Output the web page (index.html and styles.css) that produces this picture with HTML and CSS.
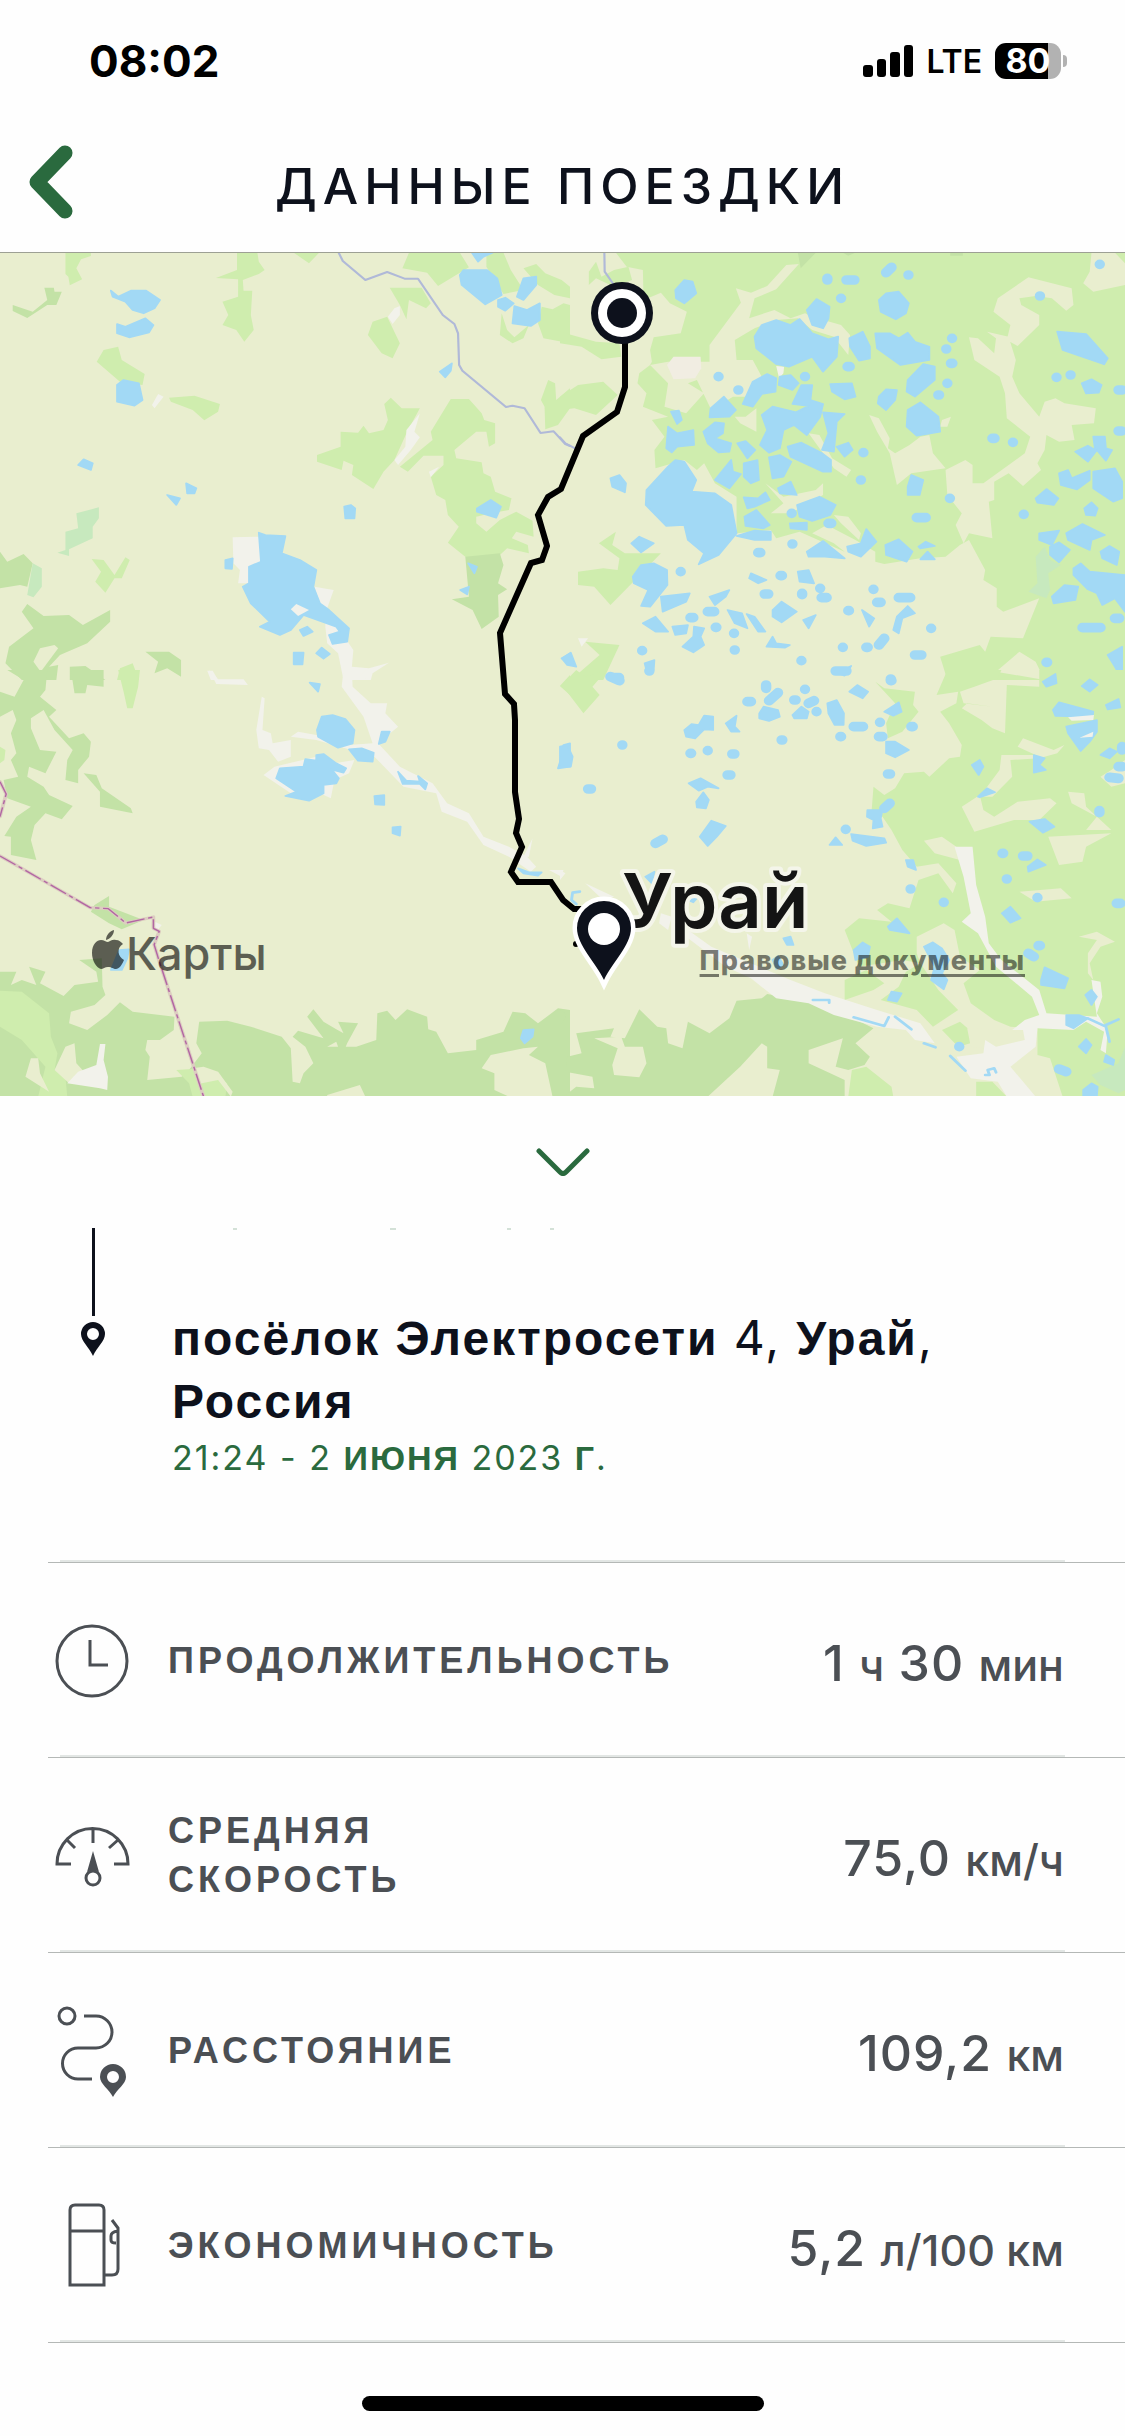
FILE: index.html
```html
<!DOCTYPE html>
<html lang="ru">
<head>
<meta charset="utf-8">
<meta name="viewport" content="width=device-width, initial-scale=1">
<title>Данные поездки</title>
<link rel="stylesheet" href="styles.css">
</head>
<body>
<div class="screen">
  <div class="status">
    <span class="status-time">08:02</span>
    <div class="status-right">
      <svg class="signal" viewBox="0 0 50 32" aria-hidden="true">
        <rect x="0" y="20" width="10" height="12" rx="3"/><rect x="14" y="14" width="9" height="18" rx="3"/><rect x="27" y="7" width="10" height="25" rx="3"/><rect x="41" y="0" width="9" height="32" rx="3"/>
      </svg>
      <span class="network">LTE</span>
      <span class="battery"><span class="battery-level">80</span></span>
    </div>
  </div>

  <header class="header">
    <button class="back" type="button" aria-label="Назад">
      <svg viewBox="0 0 46 76" aria-hidden="true"><path d="M37 9 9 38 37 67"/></svg>
    </button>
    <h1 class="title">ДАННЫЕ ПОЕЗДКИ</h1>
  </header>

  <section class="map" aria-label="Маршрут поездки">
    <svg class="map-canvas" viewBox="0 253 1125 843" preserveAspectRatio="xMidYMid slice">
      <!-- north-west -->
      <g transform="translate(0 250) scale(.36352 .33333)">
        <path class="meadow" d="M180 8 250 8 250 18 223 28 210 55 226 88 192 106 188 80 180 72zM652 8 708 8 712 35 728 60 712 72 668 90 670 122 694 122 690 195 698 240 672 275 650 240 612 225 628 195 612 155 655 140 655 88 594 84 652 60zM808 8 878 8 850 40zM1125 8 1265 8 1290 52 1205 108 1175 68 1107 55zM1338 8 1385 8 1405 60 1440 120 1385 132 1338 50zM1440 55 1475 42 1500 70 1545 90 1568 110 1568 145 1525 135 1480 105zM1490 170 1520 178 1550 160 1568 165 1568 280 1495 265 1480 220zM1380 190 1395 240 1415 262 1455 225 1440 265 1410 280 1375 255zM1072 113 1160 113 1185 160 1172 175 1125 150 1118 208 1100 165zM1065 200 1100 280 1080 325 1050 310 1012 255 1025 215zM325 290 335 330 398 372 392 405 330 395 266 335 285 300zM465 443 535 437 605 462 600 485 562 511 530 480 470 455z"/>
        <path class="meadow" d="M1075 443 1105 475 1155 475 1120 545 1085 630 1055 665 1027 717 968 675 972 645 945 632 940 660 872 635 872 615 937 590 937 545 985 548 1000 527 1015 550 1055 540 1067 510 1057 462zM1240 447 1290 447 1325 490 1332 510 1362 520 1362 580 1345 590 1338 545 1310 545 1250 600 1255 625 1325 637 1330 670 1350 680 1362 725 1407 745 1400 780 1350 790 1310 800 1310 820 1338 845 1375 810 1420 785 1465 812 1468 860 1420 845 1408 865 1452 885 1455 910 1395 895 1370 920 1285 925 1232 878 1262 830 1232 795 1225 750 1200 735 1185 680 1220 645 1220 617 1165 617 1122 665 1100 650 1190 570 1185 545zM1508 390 1527 400 1530 450 1568 415 1568 475 1535 525 1500 538 1498 470 1488 450zM252 927 285 930 315 975 345 922 357 930 335 985 315 985 290 1028 262 995 278 965zM330 1255 365 1240 382 1290 322 1290z"/>
        <path class="forest" d="M122 113 148 113 150 125 170 125 155 165 130 165 75 204 35 183 35 165 90 185 130 150zM0 905 20 935 65 912 90 940 75 1010 55 1005 0 1015zM75 1062 120 1098 190 1095 228 1125 303 1080 303 1115 240 1180 165 1215 135 1250 160 1245 155 1290 60 1290 15 1240 25 1190 92 1135 60 1085zM192 1250 235 1248 290 1290 192 1290zM400 1205 465 1205 498 1230 498 1280 460 1255 425 1270 435 1235zM1280 920 1375 910 1385 945 1370 1000 1395 1018 1370 1035 1372 1100 1325 1137 1300 1080 1243 1048 1290 1040 1285 980z"/>
        <path class="plain" d="M150 1185 160 1195 112 1265 92 1235 110 1195z"/>
        <path class="marsh" d="M210 790 272 772 272 805 255 830 255 865 190 898 190 918 158 908 180 900 180 845 215 835zM90 940 115 955 115 1010 92 1042 75 1035z"/>
        <path class="sand" d="M1085 175 1100 168 1100 195 1080 222 1067 200zM418 465 435 432 450 440 425 475zM1155 490 1140 545 1155 562 1130 600 1095 645 1085 630 1115 590 1118 540zM1180 665 1208 650 1185 682zM640 862 712 860 720 945 690 950 688 1000 655 1000 660 960 642 940zM865 1010 918 1020 900 1075 880 1060zM895 1075 935 1115 955 1130 950 1165 972 1200 968 1250 1015 1255 1070 1238 1025 1270 1020 1290 945 1290 930 1210 900 1180 895 1130zM570 1262 585 1262 600 1290 580 1290z"/>
        <path class="water" d="M305 122 325 140 360 122 402 122 440 150 425 175 395 190 365 180 345 155 310 140zM322 222 345 230 400 205 422 225 410 247 355 262 322 250zM340 390 382 400 392 450 370 467 322 455 322 405zM215 645 230 628 255 640 250 660zM512 700 540 715 535 730 515 730zM460 735 495 745 485 765zM947 770 965 765 977 775 975 805 950 805zM1265 75 1275 60 1340 60 1368 85 1380 135 1335 163 1270 105zM1298 8 1355 8 1330 20 1315 35zM1440 85 1475 80 1475 105 1440 150 1422 140zM1370 150 1390 143 1413 160 1390 182 1370 170zM1415 168 1450 180 1485 160 1485 210 1460 228 1410 220zM1210 365 1243 340 1240 362 1225 382zM1312 775 1350 750 1378 770 1365 803 1312 785zM1288 940 1312 950 1305 970zM1266 1020 1290 1010 1285 1033zM620 930 640 925 638 957 620 955zM825 1140 845 1130 860 1145 835 1158zM808 1208 835 1208 832 1243 808 1243zM870 1210 885 1193 907 1212 890 1226zM1545 1225 1568 1210 1568 1245zM712 848 730 855 785 858 775 910 825 930 870 960 862 1010 880 1060 905 1080 960 1135 955 1175 915 1182 905 1155 935 1145 925 1130 835 1095 800 1140 770 1155 715 1130 742 1115 690 1060 668 1010 685 1000 685 950 718 935z"/>
        <path class="sand" d="M800 1078 815 1062 850 1080 820 1098z"/>
      </g>

      <!-- south-west -->
      <g transform="translate(0 670) scale(.36352 .33333)">
        <path class="forest" d="M20 0 130 0 125 60 110 80 155 120 135 140 190 205 230 190 250 215 245 260 215 300 215 340 180 330 185 270 200 240 150 180 120 120 85 145 85 175 110 240 155 245 125 310 80 290 75 320 120 350 135 375 200 408 170 448 125 430 95 465 85 510 100 570 30 555 30 500 12 498 45 440 85 410 20 385 10 330 50 320 30 270 45 250 30 190 45 150 35 120 0 140 0 65 40 80 65 30zM195 0 285 0 285 50 240 45 235 70 205 70zM230 310 265 315 280 355 360 415 365 430 275 410 275 365zM300 678 300 710 395 750 335 778 300 760 250 725 260 705z"/>
        <path class="forest" d="M0 905 45 905 30 945 60 930 100 945 80 890 125 905 110 940 175 978 205 945 270 935 265 905 218 870 280 865 282 950 290 975 260 1005 195 1025 190 1060 240 1080 295 1035 330 997 365 1025 480 1040 478 1080 440 1110 405 1110 400 1140 412 1160 405 1230 500 1220 520 1200 555 1150 540 1120 548 1055 625 1052 690 1070 775 1100 800 1135 805 1235 825 1240 835 1210 862 1180 840 1130 805 1100 820 1082 890 1105 845 1040 862 1018 890 1055 925 1078 945 1090 930 1055 985 1060 955 1120 940 1160 925 1115 900 1130 980 1130 1035 1110 1038 1030 1065 1022 1088 1050 1120 1018 1175 1040 1178 1078 1200 1085 1232 1150 1310 1140 1310 1110 1385 1085 1410 1025 1445 1030 1480 1060 1535 1015 1568 1020 1568 1280 1520 1280 1500 1180 1455 1155 1480 1130 1440 1135 1350 1155 1325 1195 1360 1210 1360 1260 1400 1280 0 1280z"/>
        <path class="meadow" d="M0 962 60 965 135 1030 140 1100 158 1150 150 1200 180 1220 185 1280 105 1280 125 1190 60 1110 0 1070zM485 1200 560 1195 625 1240 620 1280 530 1280 520 1240zM325 0 385 0 380 50 365 115 350 115 340 65zM1568 15 1540 48 1568 75zM0 230 15 240 12 270 0 280z"/>
        <path class="plain" d="M205 1120 210 1180 235 1210 190 1240 150 1200 180 1130zM85 1165 105 1165 110 1210 135 1265 70 1220zM900 1275 990 1245 1005 1280 900 1280zM560 1190 600 1205 640 1265 635 1280 600 1230 545 1242 530 1195z"/>
        <path class="sand" d="M275 1122 290 1122 285 1170 297 1220 295 1260 275 1255 185 1240 215 1205 265 1185zM720 80 728 85 722 180 745 190 750 220 800 210 800 260 765 275 740 240 712 235 705 180zM800 200 820 185 870 195 960 225 1025 220 1000 140 940 50 945 0 968 0 970 50 1020 100 1065 100 1060 130 1095 170 1040 220 1100 290 1190 340 1230 400 1290 430 1330 500 1400 530 1450 560 1475 590 1460 605 1400 560 1330 525 1285 455 1215 425 1200 370 1110 350 1030 260 950 235 870 210zM725 315 755 290 870 260 920 280 975 270 960 310 920 330 910 385 880 370 800 370zM1440 560 1465 505 1455 560zM1510 600 1550 600 1545 620zM415 750 445 765 430 785zM575 0 600 28 670 28 682 45 595 42zM1005 0H1020L1010 25 985 22z"/>
        <path class="water" d="M885 140 915 135 950 147 975 180 970 220 930 233 875 200 872 180zM960 238 995 235 1028 248 1025 275 985 272zM870 255 890 252 925 280 952 295 945 308 912 298 932 325 925 340 890 345 890 370 850 392 785 378 815 365 760 325 770 295 835 290 840 267 870 272zM852 38 880 42 875 65zM1050 185 1072 185 1060 215 1042 222zM1095 305 1118 332 1155 335 1150 318 1175 340 1170 358 1155 342 1108 342zM1030 378 1057 375 1057 405 1032 403zM1080 472 1102 470 1100 497 1080 490zM1425 595 1455 607 1490 607 1480 617 1440 610zM1550 225 1568 220 1568 290 1535 295 1545 260zM1440 1080 1468 1078 1465 1100 1443 1120 1433 1105zM328 840 355 838 350 865 335 900 305 900z"/>
        <path class="border-glow" d="M0 558 60 595 248 713 298 716 346 759 422 741 422 775 438 784 424 824 437 870 560 1280M0 335 17 372 0 440"/>
        <path class="border-line" d="M0 558 60 595 248 713 298 716 346 759 422 741 422 775 438 784 424 824 437 870 560 1280M0 335 17 372 0 440"/>
      </g>

      <!-- north-east -->
      <g transform="translate(560 250) scale(.36033 .33333)">
        <path class="meadow" d="M155 8 1568 8 1568 1290 1075 1290 1055 1220 1165 1185 1180 1205 1195 1160 1285 1165 1330 1045 1230 1085 1212 1070 1212 1015 1175 990 1180 960 1135 870 1110 885 1070 920 1000 925 900 942 875 935 875 905 820 870 740 825 700 850 760 880 790 905 665 845 600 865 585 840 490 850 490 740 430 700 400 640 380 660 345 630 265 655 262 600 290 560 255 510 300 500 230 470 240 430 215 400 220 370 250 345 255 335 250 300 260 262 335 250 352 185 305 160 280 128 232 150 230 60 185 50z"/>
        <path class="meadow" d="M80 65 100 35 115 80 150 60 190 50 200 90 150 110 100 85 80 105zM0 245 100 275 165 280 170 320 115 328 60 290 0 280zM0 440 50 405 120 395 160 435 100 495 40 475 0 480zM108 880 155 845 145 885 180 910 280 910 190 1010 140 1065 95 1010 50 1005 50 965 120 955 160 960 165 925zM70 1175 165 1185 120 1290 30 1290 110 1215z"/>
        <path class="plain" d="M663 42 628 45 575 108 530 128 488 115 502 158 415 285 415 335 300 335 250 345 300 400 290 470 350 490 400 430 355 400 380 390 420 480 480 440 520 440 560 380 535 330 490 330 485 270 540 235 600 210 660 205 700 240 760 260 800 315 805 255 780 225 700 200 680 190 640 205 595 180 525 205 540 145 600 118zM485 500 515 500 545 475 545 545 500 520zM1300 82 1420 115 1425 165 1405 182 1365 145 1320 138 1275 145 1280 165 1330 195 1330 225 1270 288 1240 270 1250 225 1203 185 1215 145zM1475 8 1540 8 1568 40 1568 105 1480 125 1452 100 1470 65zM1135 262 1160 265 1205 310 1210 265 1185 245 1245 260 1265 330 1255 380 1275 430 1330 500 1345 455 1375 445 1400 460 1487 475 1482 520 1420 525 1428 570 1385 575 1350 555 1345 600 1325 640 1335 660 1285 708 1245 670 1205 695 1205 750 1190 755 1200 865 1135 850 1120 880 1098 825 1115 790 1075 735 1070 660 1125 630 1145 645 1145 700 1175 700 1290 610 1305 560 1240 505 1235 430 1220 380 1150 330z"/>
        <path class="plain" d="M858 495 885 505 915 565 910 595 930 610 970 585 1000 560 1025 555 1035 610 1070 655 975 670 935 705 915 610 880 545zM1060 510 1085 500 1075 530 1055 530zM690 550 720 555 755 625 808 660 795 680 760 655zM570 700 620 740 710 720 730 700 730 735 640 790 585 790 620 760zM760 795 800 800 835 850 830 870 780 820zM1275 1205 1320 1235 1345 1290 1210 1265z"/>
        <path class="marsh" d="M1345 890 1360 930 1390 945 1355 970 1360 1020 1350 1045 1300 1025 1325 1000 1320 920z"/>
        <path class="forest" d="M660 8 710 8 668 55zM785 8H820L800 17zM1083 8H1118V17H1083z"/>
        <path class="town" d="M297 345 315 320 390 320 392 355 375 385 315 388z"/>
        <path class="sand" d="M600 348 622 350 620 370 608 385zM50 1165 78 1165 60 1190z"/>
        <path class="water" d="M320 120 345 90 368 95 378 130 345 160 322 145zM540 260 560 225 600 210 640 225 665 207 700 250 745 268 772 260 768 320 730 365 700 320 635 350 600 342 545 295zM685 180 712 147 748 170 745 205 730 235 700 225zM885 150 905 130 940 125 968 160 960 190 932 208 890 185zM803 265 840 245 860 290 860 325 830 332 805 290zM875 250 915 250 940 265 965 248 985 275 1025 290 1025 330 945 345 880 295zM1008 342 1040 350 1040 390 985 440 962 425 965 390zM965 480 1000 457 1050 500 1055 545 990 557 962 530zM1380 245 1460 252 1520 325 1510 343 1395 300zM1448 400 1475 388 1503 405 1495 428 1460 430zM885 440 905 418 935 420 930 450 905 480 882 460zM750 402 810 400 820 440 790 448 755 425zM535 395 575 372 600 385 598 425 560 432 535 470 507 462zM610 380 640 375 662 400 645 420 607 405zM670 405 700 405 695 450 730 462 722 500 685 555 650 525 620 540 610 595 580 608 555 585 575 540 560 495 590 470 655 487 690 468 645 462z"/>
        <path class="water" d="M418 475 455 440 488 480 470 500 415 502zM300 530 325 550 370 540 372 585 325 590 310 607 295 595zM398 545 430 517 455 520 452 550 430 565 475 580 470 605 440 607 410 580zM308 485 330 482 338 510 325 522zM492 580 515 573 542 600 520 625zM730 487 790 492 768 515 760 605 727 600 745 550zM632 590 670 578 725 608 752 630 752 665 730 665 640 620zM768 590 800 578 812 600 790 620zM580 622 610 615 642 635 620 680 590 685zM510 640 548 630 552 690 530 700 510 680zM430 690 475 630 480 665 502 672 470 715zM605 715 640 695 657 735 610 730zM300 650 320 630 345 635 378 690 365 725 430 730 475 765 490 850 440 915 385 943 400 910 355 870 345 825 295 828 238 765 240 720zM658 765 720 740 765 765 750 795 700 813 665 800zM510 742 550 745 570 727 582 750 540 770 520 775zM512 800 545 780 582 825 565 835 515 828zM490 858 540 842 585 845 585 870 540 870zM638 820 685 818 685 840 640 835zM685 905 730 873 790 925 735 920 690 920zM797 890 835 880 850 837 878 875 835 920 800 905zM903 885 940 868 978 905 962 935 905 915zM995 890 1015 875 1040 888 1000 895zM1000 928 1020 905 1040 928z"/>
        <path class="water" d="M965 710 975 675 1008 690 998 735 965 735zM1320 745 1350 717 1383 745 1370 765 1325 758zM1385 670 1410 660 1420 685 1470 662 1470 690 1435 718 1390 705zM1480 665 1540 655 1560 695 1560 745 1535 755 1480 715zM1330 850 1385 842 1365 885 1330 870zM1405 850 1450 822 1512 855 1475 870 1470 900 1410 870zM1360 890 1385 877 1415 900 1385 937 1360 915zM1425 955 1445 940 1470 965 1568 975V1085L1540 1045 1505 1065 1490 1030 1465 1018 1425 975zM1365 1040 1400 1005 1438 1010 1430 1050 1370 1060zM1500 905 1525 888 1552 905 1545 945 1505 925zM1430 605 1465 587 1485 600 1480 560 1512 560 1515 595 1532 600 1515 632 1490 600 1465 635zM1455 775 1475 757 1492 775 1485 797 1460 795zM202 980 225 945 260 940 297 960 298 1005 250 1070 225 1068 245 1020 205 1000zM198 880 220 860 260 880 225 907zM280 1040 360 1030 350 1055 285 1085zM415 1040 470 1020 460 1040 430 1065zM590 1080 615 1055 657 1085 615 1117 590 1100zM230 1120 265 1100 300 1145 265 1145zM340 1190 370 1160 372 1130 400 1135 390 1160 400 1185 370 1207zM312 1130 355 1125 350 1150 320 1155zM465 1080 505 1090 520 1135 485 1120zM518 1092 540 1100 570 1145 550 1145zM660 965 690 960 705 1000 665 995zM925 1140 935 1100 965 1068 985 1090 950 1105 940 1150zM530 970 573 990 550 1000 525 985zM675 1110 710 1095 690 1135zM573 1190 590 1160 600 1180 638 1185 625 1193zM838 1080 872 1105 858 1130zM770 1270 808 1248 790 1277zM1520 1215 1560 1190V1290L1540 1250zM235 1240 262 1230 260 1260 242 1270zM5 1225 30 1208 45 1250 20 1245zM140 685 165 675 183 700 180 727 145 710z"/>
        <path class="pond" d="M742 85v5M795 90h22M905 68 920 52M967 75h0M780 145h0M440 380h0M495 420h0M680 380h0M798 350h6M1088 265h0M1072 297h0M1085 340h4M1075 400h0M1050 435h2M1378 382h0M1417 375h0M1332 138h0M1498 43h0M1200 565h6M1257 577h0M842 608h0M835 690h0M1082 745h0M1287 793h0M643 790h0M745 820h8M990 803h25M550 908h6M645 882h0M335 965h0M612 977h4M568 1032h10M672 1030v4M722 1015h0M740 1043h-14M870 1018h0M880 1057h10M940 1043h32M410 1085h18M362 1103h8M432 1132h2M483 1150h0M485 1200h0M800 1082h2M785 1192h0M850 1192h4M885 1185 900 1165M1030 1135h0M228 1202h0M670 1232h0M985 1215h18M1350 1237h2M1550 543h8M1550 420h10M1450 1133h50M1540 1105h12M150 1283h14M918 1287h0M1362 1285h0"/>
        <path class="river" d="M123 0 124 65 148 102M0 562 15 580 42 595"/>
      </g>

      <!-- south-east -->
      <g transform="translate(560 670) scale(.36033 .33333)">
        <path class="meadow" d="M1075 0 1225 0 1215 25 1150 50 1110 65 1120 100 1200 110 1130 100 1115 115 1170 150 1200 175 1235 190 1240 45 1330 50 1330 0 1568 0V1280H1395L1360 1165 1325 1155 1325 1075 1250 1070 1205 1050 1140 1000 1120 940 1165 900 1110 860 1095 780 1065 760 990 800 990 850 1000 880 950 870 830 890 790 780 830 745 920 755 880 720 910 700 970 715 995 630 1050 610 1070 640 1090 670 1100 640 1050 580 990 590 950 540 920 480 895 440 865 420 870 350 900 375 930 355 955 310 1010 305 1025 320 1080 265 1110 260 1115 225 1080 160 1055 125 1100 100 1105 65 1045 75z"/>
        <path class="meadow" d="M875 35 900 55 985 65 980 105 995 125 950 185 910 205 905 160 930 100zM5 45 45 0 70 20 130 0 90 50 110 75 65 130zM1060 1080 1110 1055 1170 1110 1105 1130zM810 1200 850 1190 920 1250 925 1280 800 1280zM1155 1235 1200 1235 1240 1280 1155 1280zM960 905 1000 880 1050 960 1105 1020 1035 1070 990 1020 890 990 940 950zM790 930 850 900 900 940 870 960 790 990z"/>
        <path class="plain" d="M1115 410 1165 375 1175 420 1205 440 1270 395 1360 385 1378 400 1330 450 1260 450 1150 485zM1225 255 1320 255 1270 230 1285 205 1370 240 1400 225 1380 250 1330 265 1250 270 1255 320 1200 380 1165 380 1220 300zM1355 500 1530 490 1460 530 1450 575 1385 585zM1410 365 1455 370 1460 410 1530 480 1460 480 1490 440 1420 400zM1275 665 1390 655 1420 685 1320 695zM1010 512 1060 500 1100 530 1110 570 1040 550zM1440 800 1490 785 1540 815 1500 830 1470 880 1480 930 1465 910 1465 850 1490 810zM1130 1075 1250 1080 1310 1110 1300 1150 1140 1130zM1500 320 1530 300 1568 270V340L1530 350z"/>
        <path class="forest" d="M0 1020 20 1035 0 1065zM45 1090 150 1075 140 1100 180 1105 220 1018 270 1070 295 1075 300 1120 340 1135 355 1055 415 1090 470 1045 490 992 560 985 575 972 740 1005 870 1075 820 1120 860 1160 845 1185 800 1200 765 1190 785 1105 690 1140 690 1180 750 1210 790 1230 790 1280H10L45 1250 95 1255 90 1220 15 1205 20 1160 60 1150z"/>
        <path class="plain" d="M95 1105 170 1100 180 1130 230 1130 240 1180 220 1222 150 1215 145 1185 160 1135zM560 1120 575 1130 575 1195 610 1200 590 1280H410L500 1190z"/>
        <path class="marsh" d="M1568 1130 1550 1180 1475 1215 1500 1245 1550 1270 1568 1260z"/>
        <path class="sand" d="M355 780 420 830 640 930 735 970 880 1020 1000 1060 1040 1120 985 1110 960 1080 880 1070 760 1035 690 1000 600 985 530 925 460 890 350 800zM1095 530 1145 530 1155 645 1180 740 1190 820 1225 870 1330 960 1350 1030 1420 1035 1490 1040 1475 930 1500 935 1505 980 1490 1030 1520 1080 1515 1150 1500 1140 1510 1085 1460 1055 1425 1080 1325 1075 1320 1130 1250 1190 1320 1280 1240 1280 1215 1235 1140 1225 1100 1160 1175 1150 1180 1110 1210 1130 1290 1110 1285 1080 1255 1080 1290 1050 1330 1035 1310 980 1210 890 1160 790 1115 755 1140 730 1120 620zM280 730 310 740 300 780 275 760zM70 640 150 680 120 690zM518 790 533 800 525 840zM0 600 15 610 0 630z"/>
        <path class="water" d="M345 180 365 162 385 165 400 137 425 140 425 180 400 178 375 205 350 200zM460 160 490 137 485 170 498 185 475 185zM553 130 565 110 605 120 610 140 580 153 553 145zM645 135 670 110 690 125 685 145 650 145zM742 100 768 90 788 130 787 165 762 165 745 130zM803 65 825 45 855 65 840 85zM900 125 940 97 948 125 925 137zM905 215 930 215 968 240 930 262 905 250zM357 340 390 325 440 355 410 350 385 362zM378 395 398 367 413 390 405 415 380 412zM388 500 420 452 460 468 435 500 410 528zM748 525 765 502 783 525zM808 492 900 505 905 518 850 528 812 512zM853 420 895 420 890 445 895 470 868 475 870 450 852 440zM0 230 20 225 35 260 30 290 0 290zM1368 120 1385 97 1480 125 1478 140 1375 138zM1405 170 1490 150 1490 185 1470 215 1445 243 1420 205 1410 190zM1448 48 1470 28 1492 45 1470 65zM1340 35 1375 12 1378 40 1350 50zM1143 285 1165 270 1175 290 1162 315zM1315 255 1345 265 1330 285 1348 300 1315 308zM1160 380 1185 355 1207 367 1165 382zM1303 455 1345 447 1372 470 1340 488zM1298 590 1325 568 1348 585 1300 605zM1226 730 1250 710 1278 745 1250 758zM960 570 980 570 988 600 965 590zM910 770 935 745 970 790 915 780zM815 840 840 817 860 830 855 860 820 870zM1010 830 1035 817 1060 835 1080 870 1060 910 1075 930 1065 958 1030 930 1040 890zM1335 930 1345 892 1410 925 1400 955 1335 945zM1458 975 1475 960 1490 980 1475 1005zM910 990 920 965 948 970 935 995zM1405 1035 1440 1035 1465 1045 1425 1075 1405 1065zM1440 1130 1460 1107 1475 1125 1460 1150zM1515 1155 1538 1170 1535 1185 1510 1175zM1452 1260 1475 1240 1492 1250 1490 1277 1452 1277zM1500 255 1525 235 1545 245 1525 265zM1515 105 1550 87 1555 112 1520 118zM590 870 605 858 620 885 600 897zM620 805 640 800 648 825 630 825zM237 620 262 605 255 640z"/>
        <path class="pond" d="M572 45v10M580 92 605 68M520 95h10M650 90h4M680 58h0M690 100 705 92M712 125h0M765 3 795 3M918 32h2M888 157h0M815 170h26M885 200h10M975 170h4M778 200h2M615 210h2M173 225h0M362 250h2M410 242h0M478 252h6M465 315h8M910 312h6M78 357h8M793 478h0M900 415 915 400M265 520 285 508M973 657h0M1065 697h0M1240 627h0M1228 550h2M1285 558h12M1325 683h0M1328 827h4M1300 850 1315 860M1545 700h10M1497 422v6M1550 290h10M1525 322 1550 325M1108 1130h0M1385 1197 1405 1205M140 20 165 32M248 3h0M1560 230v10"/>
        <path class="stream" d="M702 990h45v8M815 1042 900 1068 912 1042M930 1040 975 1078M1010 1120 1042 1132M1083 1158 1125 1202M1180 1215h12l-5-15 18-5 5 12M1465 1045 1515 1070 1525 1115M1515 1065 1550 1048M55 665 35 668 32 690 45 702"/>
        <path class="sand" d="M1410 142 1482 135 1480 150 1420 152zM1442 203 1480 185 1478 200z"/>
        <path class="water" d="M355 690 370 677 380 685 370 697z"/>
      </g>

      <path class="river" transform="translate(0 250) scale(.36352 .33333)" d="M928 0 943 33 1005 90 1065 66 1113 86 1150 86 1218 195 1250 222 1260 250 1263 345 1272 362 1392 471 1410 467 1443 475 1487 549 1523 544 1555 582 1568 588"/>
      <path class="route" d="M625 340V387L617 412 583 436 561 489 548 497 538 515 547 546 542 560 531 563 500 633 505 694 514 704 515 720V792L519 819 516 833 522 847 511 872 518 882H551L563 900 574 909H584"/>
      <circle cx="576" cy="944" r="3"/>

      <text class="city" x="622" y="928">Урай</text>

      <g class="marker">
        <circle cx="622" cy="313" r="31"/><circle class="marker-hole" cx="622" cy="313" r="24"/><circle cx="622" cy="313" r="15"/>
      </g>
      <g class="marker">
        <path class="marker-edge" d="M604 980C596 963 577 945 577 928A27 27 0 0 1 631 928C631 945 612 963 604 980z"/>
        <circle class="marker-hole" cx="604" cy="929" r="16"/>
      </g>
    </svg>
    <div class="map-legal">
      <span class="map-brand">
        <svg viewBox="0 0 32 40" aria-hidden="true"><path d="M22 0C22 5 18 9 14 10 14 5 18 1 22 0zM16 12C19 11 20 9 24 10 27 10 29 12 31 14 24 18 26 27 32 30 30 35 27 39 24 39 21 39 20 37 16 37 13 37 11 39 9 39 4 38 0 30 0 23 0 14 5 10 9 10 12 10 14 12 16 12z"/></svg>
        <span>Карты</span>
      </span>
      <a class="map-link" href="#legal">Правовые документы</a>
    </div>
  </section>

  <main class="sheet">
    <button class="collapse" type="button" aria-label="Свернуть">
      <svg viewBox="0 0 54 28" aria-hidden="true"><path d="M3 3 24 24Q27 27 30 24L51 3"/></svg>
    </button>

    <div class="place">
      <div class="place-track">
        <span class="place-line"></span>
        <svg class="place-pin" viewBox="0 0 24 34" aria-hidden="true"><path fill-rule="evenodd" d="M12 34C8 25 0 19 0 12A12 12 0 0 1 24 12C24 19 16 25 12 34zM12 6A6 6 0 1 0 12 18 6 6 0 1 0 12 6z"/></svg>
      </div>
      <div class="place-text">
        <!-- tails of the departure line scrolled under the panel edge -->
        <svg class="scrolled-line" viewBox="0 0 400 2" aria-hidden="true"><path d="M61 1h4M218 1h6M335 1h4M378 1h4"/></svg>
        <p class="address">посёлок Электросети <span class="light">4,</span> Урай<span class="light">,</span> Россия</p>
        <p class="date"><span class="light">21:24 - 2</span> ИЮНЯ <span class="light">2023</span> Г<span class="light">.</span></p>
      </div>
    </div>

    <dl class="stats">
      <div class="stat">
        <dt class="stat-name">
          <svg class="stat-icon" viewBox="0 0 80 100" aria-hidden="true"><circle cx="40" cy="51" r="35"/><path d="M38 30V55H56"/></svg>
          <span>ПРОДОЛЖИТЕЛЬНОСТЬ</span>
        </dt>
        <dd class="stat-value">1 <span class="unit">ч</span> 30 <span class="unit">мин</span></dd>
      </div>
      <div class="stat">
        <dt class="stat-name">
          <svg class="stat-icon" viewBox="0 0 80 100" aria-hidden="true"><path d="M19 59H5A35 35 0 0 1 76 59H62M41 24V38M15 35 23 43M66 35 57 43"/><circle cx="41" cy="73" r="7"/><path class="solid" d="M41 46 47 67Q41 63 35 67z"/></svg>
          <span>СРЕДНЯЯ СКОРОСТЬ</span>
        </dt>
        <dd class="stat-value">75,0 <span class="unit">км/ч</span></dd>
      </div>
      <div class="stat">
        <dt class="stat-name">
          <svg class="stat-icon" viewBox="0 0 80 100" aria-hidden="true"><circle cx="15" cy="16" r="8"/><path d="M32 16H44A15 15 0 0 1 44 48H26A15 15 0 0 0 26 79H40"/><path class="solid" fill-rule="evenodd" d="M61 97C57 89 48 84 48 77A13 13 0 0 1 74 77C74 84 65 89 61 97zM61 71A6 6 0 1 0 61 83 6 6 0 1 0 61 71z"/></svg>
          <span>РАССТОЯНИЕ</span>
        </dt>
        <dd class="stat-value">109,2 <span class="unit">км</span></dd>
      </div>
      <div class="stat">
        <dt class="stat-name">
          <svg class="stat-icon" viewBox="0 0 80 100" aria-hidden="true"><path d="M18 90V15Q18 10 23 10H47Q52 10 52 15V90zM18 36H52M52 80H60Q66 80 66 74V33L60 25M66 36Q59 37 59 41V45Q59 48 64 48"/></svg>
          <span>ЭКОНОМИЧНОСТЬ</span>
        </dt>
        <dd class="stat-value">5,2 <span class="unit">л/100 км</span></dd>
      </div>
    </dl>
    <div class="home-indicator"></div>
  </main>
</div>
</body>
</html>
```
FILE: styles.css
```css
* { box-sizing: border-box; }

body {
  margin: 0;
  background: #fefefe;
  color: #0d111c;
  font-family: Inter, "Liberation Sans", sans-serif;
}

button {
  padding: 0;
  border: 0;
  background: none;
  cursor: pointer;
}

svg { display: block; }

.screen {
  display: flex;
  flex-direction: column;
  min-height: 100vh;
}

/* Status bar */
.status {
  display: flex;
  align-items: center;
  justify-content: space-between;
  height: 122px;
  padding: 0 58px 0 89px;
  color: #000;
}

.status-time { font-size: 44px; font-weight: 700; }

.status-right {
  display: flex;
  align-items: center;
  gap: 13px;
}

.signal { width: 50px; height: 32px; }

.network { font-size: 32px; font-weight: 600; }

.battery {
  position: relative;
  width: 66px;
  height: 36px;
  margin-right: 6px;
  border-radius: 11px;
  background: linear-gradient(90deg, #000 80%, #b2b2b2 80%);
}

.battery::after {
  content: "";
  position: absolute;
  top: 12px;
  right: -6px;
  width: 4px;
  height: 12px;
  border-radius: 0 4px 4px 0;
  background: #b2b2b2;
}

.battery-level {
  display: block;
  color: #fff;
  font-size: 34px;
  font-weight: 700;
  line-height: 36px;
  text-align: center;
}

/* Title bar */
.header {
  display: grid;
  grid-template-columns: 100px 1fr 100px;
  align-items: center;
  height: 131px;
  padding-bottom: 10px;
  border-bottom: 1px solid #9da094;
}

.back { width: 46px; margin-left: 28px; }

.back path {
  fill: none;
  stroke: #2a6a3e;
  stroke-width: 15;
  stroke-linecap: round;
  stroke-linejoin: round;
}

.title {
  margin: 0;
  padding-top: 8px;
  font-size: 50px;
  font-weight: 500;
  letter-spacing: 6px;
  line-height: 60px;
  text-align: center;
}

/* Map */
.map {
  position: relative;
  aspect-ratio: 1125 / 843;
  overflow: hidden;
  background: #e9eecf;
}

.map-canvas { width: 100%; height: 100%; }

.plain { fill: #e9eecf; }
.meadow { fill: #cfedae; }
.forest { fill: #c3e2a6; }
.marsh { fill: #c7e9be; }
.sand { fill: #f2f2eb; }
.town { fill: #f1ede2; }
.water { fill: #a2d9f5; }

.pond, .stream, .river, .route, .border-glow, .border-line {
  fill: none;
  stroke-linecap: round;
  stroke-linejoin: round;
}

.water { stroke: #a2d9f5; stroke-width: 5; stroke-linejoin: round; }
.pond { stroke: #a2d9f5; stroke-width: 29; }
.stream { stroke: #a2d9f5; stroke-width: 8; }
.river { stroke: #b0b9d8; stroke-width: 6; }
.route { stroke: #000; stroke-width: 6; stroke-linejoin: miter; }
.border-glow { stroke: #dccdc0; stroke-width: 10; }
.border-line { stroke: #b266a3; stroke-width: 4; stroke-dasharray: 50 10 12 10; stroke-linecap: butt; }

.city {
  fill: #141414;
  stroke: #f4f5ea;
  stroke-width: 8;
  stroke-linejoin: round;
  paint-order: stroke;
  font-size: 76px;
  font-weight: 600;
}

.marker { fill: #0d111c; }
.marker-hole { fill: #fff; }
.marker-edge { stroke: #fff; stroke-width: 9; paint-order: stroke; }

.map-legal {
  position: absolute;
  right: 100px;
  bottom: 112px;
  left: 92px;
  display: flex;
  align-items: baseline;
  justify-content: space-between;
}

.map-brand {
  display: flex;
  align-items: baseline;
  gap: 2px;
  color: #000;
  font-size: 45px;
  font-weight: 500;
  line-height: 60px;
  opacity: .6;
}

.map-brand svg { width: 32px; height: 40px; }

.map-link {
  color: rgba(0, 0, 0, .5);
  font-size: 27px;
  font-weight: 800;
  letter-spacing: 1px;
  text-decoration-thickness: 3px;
  text-underline-offset: 4px;
}

/* Details */
.sheet {
  display: flex;
  flex: 1;
  flex-direction: column;
}

.collapse {
  align-self: center;
  width: 54px;
  height: 132px;
  padding: 48px 0;
}

.collapse path {
  fill: none;
  stroke: #2a6a3e;
  stroke-width: 5;
  stroke-linecap: round;
}

.place {
  display: grid;
  grid-template-columns: 24px 1fr;
  gap: 67px;
  padding: 0 100px 0 81px;
}

.place-track {
  display: flex;
  flex-direction: column;
  align-items: center;
  gap: 6px;
}

.place-line { width: 3px; height: 88px; background: #0d111c; }
.place-pin { width: 24px; height: 34px; fill: #0d111c; }

.place-text {
  padding-bottom: 79px;
  font-family: "Liberation Sans", Arial, sans-serif;
  font-weight: 700;
}

.scrolled-line {
  width: 400px;
  height: 2px;
  margin-bottom: 76px;
  stroke: #a9c4b1;
}

.address {
  margin: 0;
  font-size: 48px;
  letter-spacing: 2px;
  line-height: 63px;
}

.date {
  margin: 0;
  color: #2a6a3e;
  font-size: 34px;
  letter-spacing: 2px;
  line-height: 50px;
}

.light { font-family: Inter, sans-serif; font-weight: 400; }

.stats {
  position: relative;
  margin: 0 0 0 48px;
  border-top: 1px solid #b4b8b6;
}

.stats::before {
  content: "";
  position: absolute;
  top: -3px;
  right: 60px;
  left: 12px;
  height: 2px;
  background: #e2e6e4;
}

.stat {
  position: relative;
  display: flex;
  align-items: center;
  justify-content: space-between;
  height: 195px;
  padding: 0 61px 0 4px;
  border-bottom: 1px solid #b4b8b6;
  color: #4b4f54;
}

.stat::after {
  content: "";
  position: absolute;
  right: 60px;
  bottom: 0;
  left: 12px;
  height: 2px;
  background: #e2e6e4;
}

.stat-name {
  display: flex;
  align-items: center;
  gap: 36px;
  max-width: 560px;
  font-family: "Liberation Sans", Arial, sans-serif;
  font-size: 36px;
  font-weight: 700;
  letter-spacing: 4px;
  line-height: 49px;
}

.stat:nth-child(2) .stat-name { max-width: 400px; }

.stat-icon {
  flex: none;
  width: 80px;
  height: 100px;
  fill: none;
  stroke: #4b4f54;
  stroke-width: 3;
}

.stat-icon .solid { fill: #4b4f54; stroke: none; }

.stat-value {
  margin: 0;
  padding-top: 6px;
  font-size: 50px;
  font-weight: 500;
  letter-spacing: 1px;
  white-space: nowrap;
}

.unit { font-size: 43px; letter-spacing: 0; }

.home-indicator {
  align-self: center;
  width: 402px;
  height: 15px;
  margin-top: 53px;
  border-radius: 8px;
  background: #000;
}
```
